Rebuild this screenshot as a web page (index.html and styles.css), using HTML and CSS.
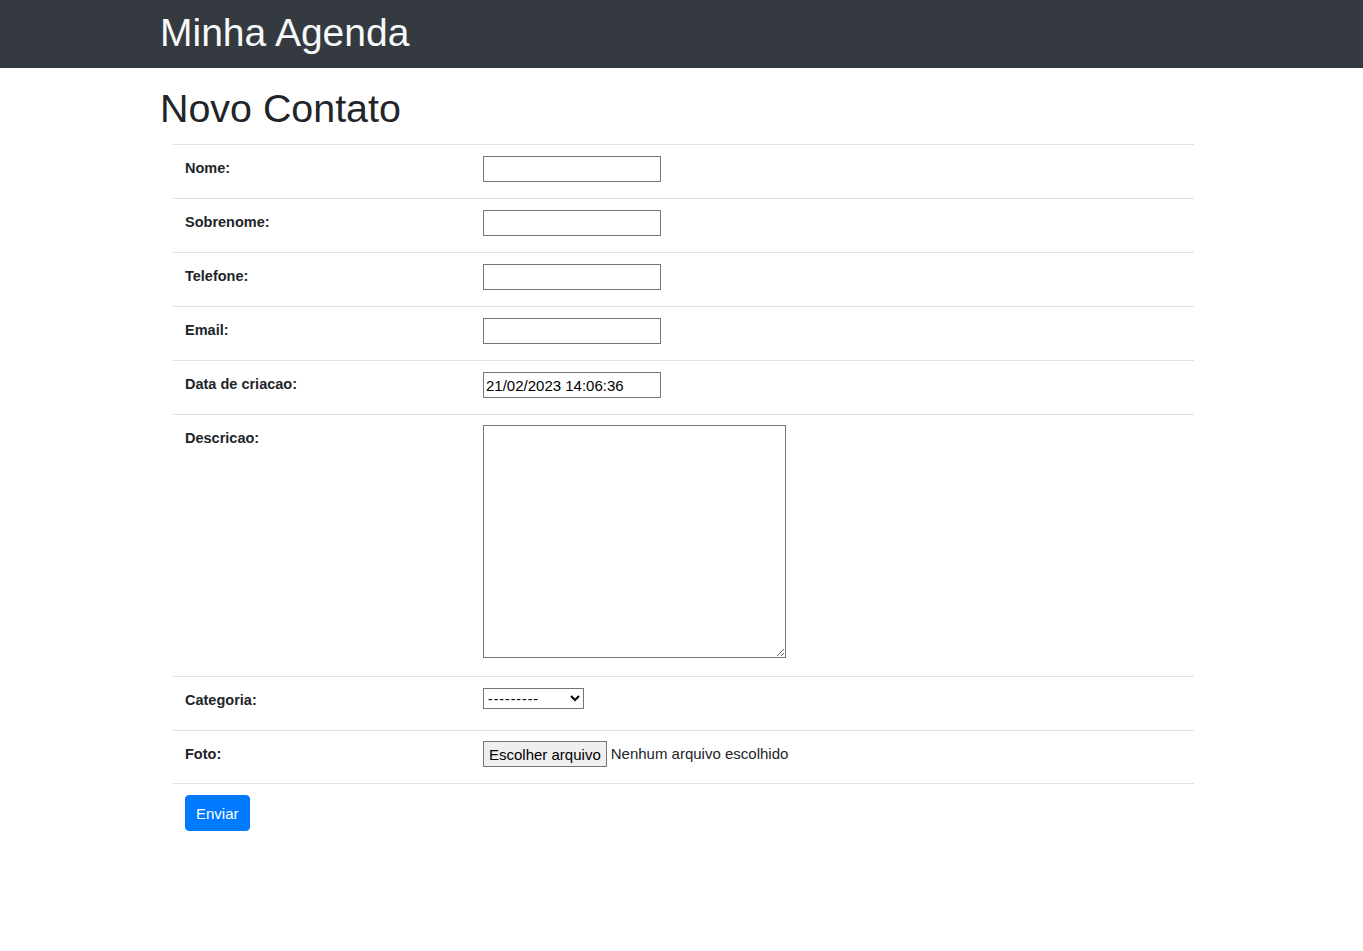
FILE: index.html
```html
<!DOCTYPE html>
<html lang="pt-br">
<head>
<meta charset="utf-8">
<title>Minha Agenda</title>
<link rel="stylesheet" href="styles.css">
</head>
<body>
<header class="navbar">
  <h1 class="brand">Minha Agenda</h1>
</header>
<main class="page">
  <h1 class="page-title">Novo Contato</h1>
  <form class="contact-form">
    <div class="form-row">
      <div class="label-cell">Nome:</div>
      <div class="field-cell"><input class="text-input" type="text"></div>
    </div>
    <div class="form-row">
      <div class="label-cell">Sobrenome:</div>
      <div class="field-cell"><input class="text-input" type="text"></div>
    </div>
    <div class="form-row">
      <div class="label-cell">Telefone:</div>
      <div class="field-cell"><input class="text-input" type="text"></div>
    </div>
    <div class="form-row">
      <div class="label-cell">Email:</div>
      <div class="field-cell"><input class="text-input" type="text"></div>
    </div>
    <div class="form-row">
      <div class="label-cell">Data de criacao:</div>
      <div class="field-cell"><input class="text-input" type="text" value="21/02/2023 14:06:36"></div>
    </div>
    <div class="form-row">
      <div class="label-cell">Descricao:</div>
      <div class="field-cell field-textarea"><textarea class="text-area"></textarea></div>
    </div>
    <div class="form-row">
      <div class="label-cell">Categoria:</div>
      <div class="field-cell field-select">
        <select class="select-input">
          <option>---------</option>
        </select>
      </div>
    </div>
    <div class="form-row">
      <div class="label-cell">Foto:</div>
      <div class="field-cell field-file">
        <button type="button" class="file-btn">Escolher arquivo</button><span class="file-name">Nenhum arquivo escolhido</span>
      </div>
    </div>
    <div class="submit-row">
      <button type="submit" class="btn-primary">Enviar</button>
    </div>
  </form>
</main>
</body>
</html>
```

FILE: styles.css
```css
* {
  box-sizing: border-box;
}

html, body {
  margin: 0;
  padding: 0;
  background: #fff;
}

body {
  font-family: "Liberation Sans", Arial, sans-serif;
  color: #212529;
  font-size: 16px;
  line-height: 1.5;
}

.navbar {
  background: #343a40;
  height: 68px;
  padding: 9px 0 0 160px;
}

.brand {
  margin: 0;
  font-size: 39px;
  font-weight: 400;
  line-height: 48px;
  color: #f8f9fa;
}

.page {
  padding: 0 0 0 160px;
}

.page-title {
  margin: 16px 0 12px;
  font-size: 39.4px;
  font-weight: 400;
  line-height: 48px;
  color: #212529;
}

.contact-form {
  margin-left: 13px;
  width: 1021px;
}

.form-row {
  display: grid;
  grid-template-columns: 298px 1fr;
  border-top: 1px solid #dee2e6;
}

.label-cell {
  padding: 11px 12px 0;
  font-weight: 700;
  font-size: 14.5px;
  line-height: 24px;
  color: #212529;
}

.field-cell {
  padding: 11px 12px 16px;
  display: flex;
  align-items: flex-start;
}

.text-input {
  display: block;
  width: 178px;
  height: 26px;
  margin: 0;
  padding: 1px 2px;
  border: 1px solid #767676;
  border-radius: 0;
  font-family: "Liberation Sans", Arial, sans-serif;
  font-size: 15px;
  color: #000;
  background: #fff;
}

.field-textarea {
  padding-top: 10px;
  padding-bottom: 18px;
}

.text-area {
  display: block;
  width: 303px;
  height: 233px;
  margin: 0;
  border: 1px solid #767676;
  border-radius: 0;
  font-family: "Liberation Sans", Arial, sans-serif;
  font-size: 15px;
}

.field-select {
  padding-bottom: 21px;
}

.select-input {
  display: block;
  width: 101px;
  height: 21px;
  margin: 0;
  border: 1px solid #767676;
  border-radius: 0;
  font-family: "Liberation Sans", Arial, sans-serif;
  font-size: 14px;
  letter-spacing: 1px;
  color: #000;
  background: #fff;
}

.field-file {
  padding-top: 10px;
  align-items: center;
}

.file-btn {
  height: 26px;
  margin: 0;
  padding: 0 5px;
  border: 1px solid #767676;
  border-radius: 0;
  background: #efefef;
  font-family: "Liberation Sans", Arial, sans-serif;
  font-size: 15px;
  color: #000;
}

.file-name {
  margin-left: 4px;
  font-size: 15px;
  color: #212529;
}

.submit-row {
  border-top: 1px solid #dee2e6;
  padding: 11px 12px 12px;
}

.btn-primary {
  display: block;
  height: 36px;
  padding: 0 10px;
  border: 1px solid #007bff;
  border-radius: 4px;
  background: #007bff;
  color: #fff;
  font-family: "Liberation Sans", Arial, sans-serif;
  font-size: 15px;
}
```
